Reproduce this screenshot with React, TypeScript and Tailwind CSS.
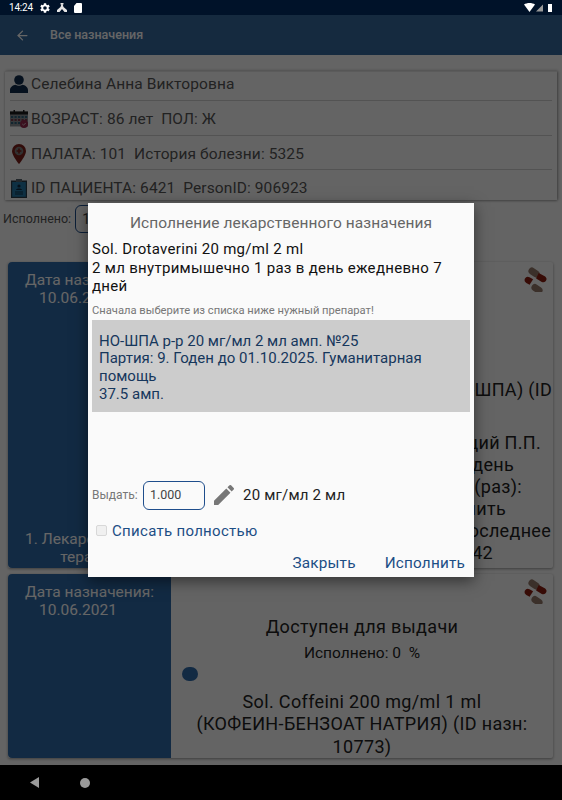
import { ArrowLeft } from 'lucide-react';

function PersonIcon() {
  return (
    <svg width="18" height="18" viewBox="0 0 18 18">
      <circle cx="9" cy="5" r="4.800" fill="#0f2c4c" />
      <path d="M0 18v-3c0-3 3-5 5.500-5.300 2 1.500 5 1.500 7 0C15 10 18 12 18 15v3z" fill="#0f2c4c" />
    </svg>
  );
}

function CalendarIcon() {
  return (
    <svg width="18" height="18" viewBox="0 0 18 18">
      <rect x="0" y="1.500" width="18" height="15" fill="#8a9094" />
      <rect x="0" y="1.500" width="18" height="3" fill="#1d1d1d" />
      <rect x="3.500" y="0" width="1.500" height="3" fill="#1d1d1d" />
      <rect x="13" y="0" width="1.500" height="3" fill="#1d1d1d" />
      {[1, 4.500, 8, 11.500, 15].map(x =>
        [6, 9, 12].map(y => (
          <rect key={`${x}-${y}`} x={x} y={y} width="2.200" height="2" fill={y === 9 ? '#7a3a48' : '#2e6078'} />
        ))
      )}
      <circle cx="14" cy="14" r="4" fill="#93294c" />
      <path d="M12.300 14l1.200 1.200 2.200-2.200" stroke="#ddd" strokeWidth="0.800" fill="none" />
    </svg>
  );
}

function PinIcon() {
  return (
    <svg width="14" height="20" viewBox="0 0 14 20">
      <path d="M7 0a7 7 0 0 0-7 7c0 4.800 7 13 7 13s7-8.200 7-13a7 7 0 0 0-7-7z" fill="#7c1f1a" />
      <circle cx="7" cy="7" r="4.300" fill="#7a7a7a" />
      <path d="M7 4.600v4.800M4.600 7h4.800" stroke="#7c1f1a" strokeWidth="1.600" />
    </svg>
  );
}

function ClipboardIcon() {
  return (
    <svg width="16" height="19" viewBox="0 0 16 19">
      <rect x="0" y="1.500" width="16" height="17.500" fill="#2a3a46" />
      <rect x="1.200" y="3" width="13.600" height="14.800" fill="#2378a8" />
      <rect x="5" y="0" width="6" height="3" fill="#55616b" />
      <circle cx="8" cy="7" r="1.600" fill="#0d2a40" />
      <path d="M5 11c0-2 6-2 6 0z" fill="#0d2a40" />
      <path d="M4 13h8M4 15h8" stroke="#0d2a40" strokeWidth="0.900" />
    </svg>
  );
}

function PillsIcon() {
  return (
    <svg width="26" height="26" viewBox="8 3 26 26" className="absolute top-[4px] right-[4px]">
      <rect x="13" y="6" width="12" height="7" rx="3.500" fill="#94786a" transform="rotate(35 19 9.500)" />
      <rect x="16" y="22.500" width="12" height="7" rx="3.500" fill="#94786a" transform="rotate(35 22 26)" />
      <path d="M9.800 15.700a3.600 3.600 0 0 1 4.700-1.500l3.600 2.100-3.500 5.500-3.300-1.900a3.600 3.600 0 0 1-1.500-4.200z" fill="#8b1d10" />
      <path d="M30.600 18.300a3.600 3.600 0 0 0-.4-4.900l-6.500-3.300-2.600 5.300 5.700 3.500a3.600 3.600 0 0 0 3.800-.6z" fill="#8b1d10" />
    </svg>
  );
}

function PatientRow({ icon, className, children }: { icon: React.ReactNode; className: string; children: React.ReactNode }) {
  return (
    <div className={`flex items-end ${className}`}>
      <div className="flex items-center">
        <div className="w-[19px] -ml-[1px] flex justify-center">{icon}</div>
        <span className="ml-[3px] text-[15.500px] leading-[24px] tracking-[0.1px] text-[#555] whitespace-pre">{children}</span>
      </div>
    </div>
  );
}

export default function App() {
  return (
    <div className="relative w-[562px] h-[800px] overflow-hidden flex flex-col bg-[#fafafa] font-['Roboto',sans-serif]">
      {/* Status bar */}
      <div className="h-[15px] shrink-0 bg-[#001229] flex items-center justify-between pl-[9px] pr-[9px] text-white relative z-30">
        <div className="flex items-center gap-[7px]">
          <span className="text-[10px] tracking-[-0.2px]">14:24</span>
          <svg width="10" height="10" viewBox="2 2 20 20" fill="#fff">
            <path d="M19.140 12.940c.040-.300.060-.610.060-.940s-.020-.640-.070-.940l2.030-1.580a.5.5 0 0 0 .120-.610l-1.920-3.320a.5.5 0 0 0-.590-.220l-2.390.960a7 7 0 0 0-1.620-.940l-.360-2.540a.5.5 0 0 0-.480-.410h-3.840a.5.5 0 0 0-.470.410l-.360 2.540c-.590.240-1.130.570-1.620.940l-2.390-.960a.5.5 0 0 0-.590.220L2.740 8.870a.5.500 0 0 0 .120.610l2.030 1.580c-.050.300-.090.630-.090.940s.020.640.070.940l-2.030 1.580a.5.5 0 0 0-.120.610l1.920 3.320c.120.220.370.290.590.220l2.390-.960c.500.380 1.030.700 1.620.940l.360 2.540c.050.240.240.410.480.410h3.840c.240 0 .440-.170.470-.410l.360-2.540c.590-.240 1.130-.560 1.620-.940l2.390.960c.220.080.470 0 .590-.220l1.920-3.320a.5.5 0 0 0-.120-.610l-2.010-1.580zM12 15.600a3.600 3.600 0 1 1 0-7.200 3.600 3.600 0 0 1 0 7.200z" />
          </svg>
          <svg width="10" height="9" viewBox="0 0 10 9" fill="#e5e5e5"><path d="M3.500 0h3v1.500H5.700L6.500 4 10 7v2H7.500L5 6 2.500 9H0V7l3.500-3 .8-2.500h-.8z" /></svg>
          <svg width="8" height="10" viewBox="0 0 8 10" fill="#fff"><path d="M2.500 0H7a1 1 0 0 1 1 1v8a1 1 0 0 1-1 1H1a1 1 0 0 1-1-1V3z" /></svg>
        </div>
        <div className="flex items-center gap-[1px]">
          <svg width="11" height="9" viewBox="0 0 11 9" fill="#fff"><path d="M0 1.500C3-.5 8-.5 11 1.500L5.500 9z" /></svg>
          <svg width="7" height="8" viewBox="0 0 8 8" fill="#9a9a9a"><path d="M0 8L8 0v8z" /></svg>
          <svg width="5" height="9" viewBox="0 0 5 9" fill="#fff" className="ml-[4px]"><path d="M1 1h3v8H0V1z" /></svg>
        </div>
      </div>

      {/* Page under the dialog */}
      <div className="relative flex-1 flex flex-col min-h-0 overflow-hidden">
        <div className="h-[40px] shrink-0 bg-[#366a9f] flex items-center pl-[15px] text-white">
          <ArrowLeft size={15} strokeWidth={2} />
          <span className="ml-[20px] text-[12.500px] font-medium">Все назначения</span>
        </div>

        <div className="flex-1 flex flex-col pl-[5px] pr-[5px] pt-[16px] min-h-0">
          <div className="shrink-0 border-t border-[#e4e4e4] shadow-[1px_0_3px_rgba(0,0,0,0.35),0_1px_2px_rgba(0,0,0,0.2)] px-[5px]">
            <PatientRow icon={<PersonIcon />} className="h-[29px] pb-[4px] border-b border-[#cfcfcf]">Селебина Анна Викторовна</PatientRow>
            <PatientRow icon={<CalendarIcon />} className="h-[35px] pb-[4px] border-b border-[#cfcfcf]">{'ВОЗРАСТ: 86 лет  ПОЛ: Ж'}</PatientRow>
            <PatientRow icon={<PinIcon />} className="h-[34px] pb-[3px] border-b border-[#cfcfcf]">{'ПАЛАТА: 101  История болезни: 5325'}</PatientRow>
            <PatientRow icon={<ClipboardIcon />} className="h-[30px]">{'ID ПАЦИЕНТА: 6421  PersonID: 906923'}</PatientRow>
          </div>

          <div className="flex items-center mt-[4px] -ml-[2px] h-[30px] shrink-0">
            <span className="text-[12.500px] text-[#555]">Исполнено:</span>
            <div className="ml-[4px] w-[60px] h-[28px] rounded-[6px] border border-[#1f4e8c] pl-[6px] flex items-center text-[14px] text-[#444]">1</div>
          </div>

          {/* First card */}
          <div className="relative mt-[28px] ml-[3px] mr-[4px] h-[306px] shrink-0 flex bg-[#fafafa] shadow-[0_1px_3px_rgba(0,0,0,0.4)] rounded-[2px]">
            <div className="w-[163px] shrink-0 bg-[#2f6aa8] rounded-l-[4px] text-white text-center text-[15.500px] leading-[18px] pt-[9px] flex flex-col justify-between pb-[2px]">
              <div>
                <div>Дата назначения:</div>
                <div className="pr-[23px]">10.06.2021</div>
              </div>
              <div>
                <div className="whitespace-nowrap">1. Лекарственная</div>
                <div>терапия</div>
              </div>
            </div>
            <div className="relative flex-1 text-[18px] tracking-[0.3px] leading-[22px] text-[#222] flex flex-col items-end">
              <PillsIcon />
              <span className="mt-[117px] mr-[1px] whitespace-nowrap">Sol. Drotaverini (НО-ШПА) (ID</span>
              <span className="mt-[31px] mr-[12px] whitespace-nowrap">Заведующий П.П.</span>
              <span className="mr-[39px] whitespace-nowrap">1 раз в день</span>
              <span className="mr-[31px] whitespace-nowrap">Доза (раз):</span>
              <span className="mr-[47px] whitespace-nowrap">Выполнить</span>
              <span className="mr-[2px] whitespace-nowrap">Последнее</span>
              <span className="mr-[60px] whitespace-nowrap">42</span>
            </div>
          </div>

          {/* Second card */}
          <div className="relative mt-[6px] ml-[3px] mr-[4px] h-[184px] shrink-0 flex bg-[#fafafa] shadow-[0_1px_3px_rgba(0,0,0,0.4)] rounded-[2px]">
            <div className="w-[163px] shrink-0 bg-[#2f6aa8] rounded-l-[4px] text-white text-center text-[15.500px] leading-[18px] pt-[9px]">
              <div>Дата назначения:</div>
              <div className="pr-[23px]">10.06.2021</div>
            </div>
            <div className="relative flex-1 flex flex-col items-center text-[#222] pt-[43px] px-[2px] text-center">
              <PillsIcon />
              <div className="text-[18px] leading-[20px] tracking-[0.35px]">Доступен для выдачи</div>
              <div className="text-[15.500px] leading-[18px] mt-[7px] whitespace-pre">Исполнено: 0  %</div>
              <div className="self-start ml-[9px] mt-[5px] w-[16px] h-[15px] rounded-full bg-[#2f6aa8]" />
              <div className="text-[18px] tracking-[0.35px] leading-[22.500px] mt-[10px]">
                Sol. Coffeini 200 mg/ml 1 ml<br />(КОФЕИН-БЕНЗОАТ НАТРИЯ) (ID назн:<br />10773)
              </div>
            </div>
          </div>
        </div>

        {/* Dim layer */}
        <div className="absolute inset-0 bg-black/60" />
      </div>

      {/* Nav bar */}
      <div className="h-[35px] shrink-0 bg-black flex items-center pl-[30px] gap-[41px] relative z-30">
        <svg width="9" height="11" viewBox="0 0 9 11" fill="#9a9a9a"><path d="M9 0v11L0 5.500z" /></svg>
        <div className="w-[10px] h-[10px] rounded-full bg-[#9a9a9a]" />
      </div>

      {/* Dialog */}
      <div className="absolute left-[88px] top-[203px] w-[386px] h-[374px] z-20 bg-[#fafafa] shadow-[0_4px_14px_rgba(0,0,0,0.5)] px-[4px] flex flex-col">
        <div className="text-center text-[15.500px] leading-[20px] tracking-[0.07px] text-[#666] pt-[10px]">Исполнение лекарственного назначения</div>
        <div className="text-[15px] leading-[18.500px] tracking-[0.3px] text-[#111] mt-[7px]">
          Sol. Drotaverini 20 mg/ml 2 ml<br />2 мл внутримышечно 1 раз в день ежедневно 7 дней
        </div>
        <div className="text-[11.200px] leading-[14px] text-[#777] mt-[8px]">Сначала выберите из списка ниже нужный препарат!</div>
        <div className="bg-[#cccccc] h-[92px] mt-[2px] px-[7px] pt-[13px] text-[15px] leading-[17.700px] text-[#16375c] shrink-0">
          НО-ШПА р-р 20 мг/мл 2 мл амп. №25<br />Партия: 9. Годен до 01.10.2025. Гуманитарная помощь<br />37.5 амп.
        </div>
        <div className="flex items-center mt-[69px]">
          <span className="text-[12px] text-[#777] w-[51px]">Выдать:</span>
          <div className="w-[62px] h-[29px] rounded-[6px] border border-[#1f4e8c] flex items-center pl-[6px] text-[12.500px] text-[#444]">1.000</div>
          <svg width="20" height="20" viewBox="3 3 18 18" fill="#777" className="ml-[9px]">
            <path d="M3 17.250V21h3.750L17.810 9.940l-3.750-3.750L3 17.250zM20.710 7.040a1 1 0 0 0 0-1.410l-2.340-2.340a1 1 0 0 0-1.410 0l-1.830 1.830 3.750 3.750 1.830-1.830z" />
          </svg>
          <span className="ml-[9px] text-[15px] tracking-[0.2px] text-[#222]">20 мг/мл 2 мл</span>
        </div>
        <div className="flex items-center mt-[10px] pl-[4px]">
          <div className="w-[11px] h-[11px] rounded-[2px] border border-[#d8d8d8] bg-[#f0f0f0]" />
          <span className="ml-[5px] text-[15px] tracking-[0.3px] text-[#1c4e85]">Списать полностью</span>
        </div>
        <div className="flex justify-end gap-[29px] pr-[5px] mt-[10px] text-[15.300px] tracking-[0.2px] text-[#1c4e85]">
          <span>Закрыть</span>
          <span>Исполнить</span>
        </div>
      </div>
    </div>
  );
}
